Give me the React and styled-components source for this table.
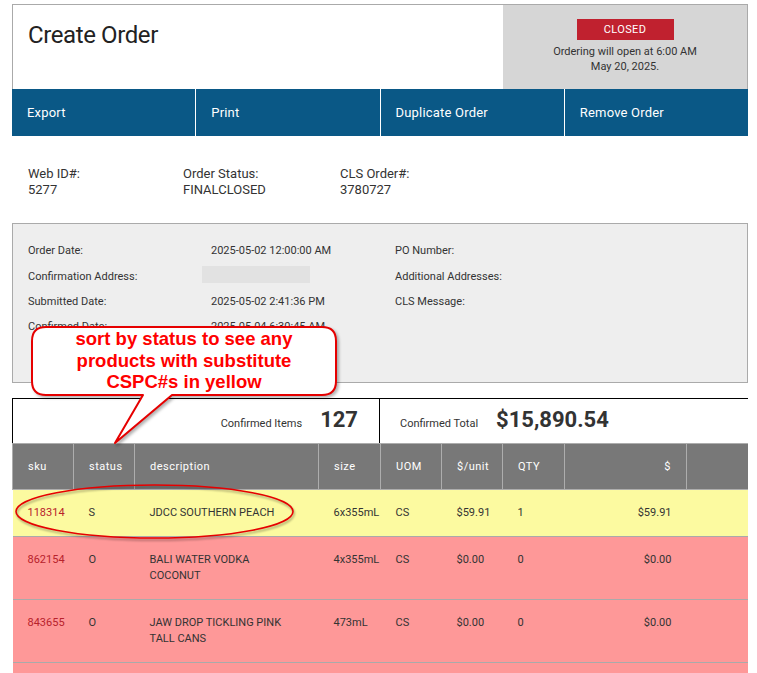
import React from "react";
import styled, { createGlobalStyle } from "styled-components";

const GlobalStyle = createGlobalStyle`
  *, *::before, *::after {
    box-sizing: border-box;
  }
  body {
    margin: 0;
    background: #ffffff;
    font-family: Roboto, "Liberation Sans", Arial, sans-serif;
    color: #333333;
  }
`;

const Page = styled.div`
  position: relative;
  width: 748px;
  height: 673px;
  padding: 4px 0 0 12px;
  overflow: hidden;
`;

const Header = styled.header`
  display: flex;
  height: 85px;
  border: 1px solid #aaaaaa;
  border-bottom: none;
`;

const Title = styled.h1`
  flex: 1;
  margin: 0;
  padding: 15px 0 0 15px;
  font-size: 24px;
  font-weight: 400;
  line-height: 30px;
  letter-spacing: -0.4px;
  color: #222222;
`;

const StatusPanel = styled.div`
  width: 244px;
  background: #d6d6d6;
  display: flex;
  flex-direction: column;
  align-items: center;
  padding-top: 14px;
  font-size: 11px;
  line-height: 15px;
  color: #333333;
  text-align: center;
`;

const Badge = styled.span`
  display: flex;
  align-items: center;
  justify-content: center;
  width: 97px;
  height: 21px;
  margin-bottom: 4px;
  background: #c0212f;
  color: #ffffff;
  font-size: 11px;
  letter-spacing: 0.4px;
`;

const NavBar = styled.nav`
  display: grid;
  grid-template-columns: repeat(4, 1fr);
  gap: 1px;
  background: #ffffff;
`;

const NavButton = styled.div`
  height: 47px;
  display: flex;
  align-items: center;
  padding-left: 15px;
  background: #0a5886;
  color: #ffffff;
  font-size: 13px;
  letter-spacing: 0.2px;
`;

const Meta = styled.section`
  display: grid;
  grid-template-columns: 155px 157px 1fr;
  padding: 30px 0 25px 16px;
  font-size: 13px;
  line-height: 16px;
  color: #333333;
`;

const Details = styled.section`
  display: grid;
  grid-template-columns: 183px 184px 1fr;
  grid-auto-rows: 25.4px;
  align-items: center;
  height: 160px;
  padding: 14px 0 0 15px;
  background: #eeeeee;
  border: 1px solid #aaaaaa;
  font-size: 11px;
  color: #333333;
`;

const Redacted = styled.span`
  display: block;
  width: 108px;
  height: 17px;
  margin: -4px 0 0 -9px;
  background: #e2e2e2;
`;

const Summary = styled.section`
  display: flex;
  margin-top: 15px;
  height: 45px;
  border-top: 1px solid #000000;
`;

const SummaryHalf = styled.div`
  display: flex;
  align-items: baseline;
  justify-content: ${(p) => (p.$end ? "flex-end" : "flex-start")};
  gap: 18px;
  width: ${(p) => (p.$end ? "368px" : "auto")};
  flex: ${(p) => (p.$end ? "none" : 1)};
  padding: 10px ${(p) => (p.$end ? "21px" : "0")} 0 ${(p) => (p.$end ? "0" : "20px")};
  border-left: ${(p) => (p.$end ? "1px solid #000" : "none")};
  border-right: ${(p) => (p.$end ? "1px solid #000" : "none")};
`;

const SummaryLabel = styled.span`
  font-size: 11px;
  color: #333333;
`;

const SummaryValue = styled.span`
  font-size: 22px;
  line-height: 22px;
  font-weight: 700;
  color: #333333;
`;

const Table = styled.table`
  width: 736px;
  table-layout: fixed;
  border-collapse: collapse;
  font-size: 11px;
`;

const Th = styled.th`
  height: 46px;
  padding: 0 15px;
  background: #787878;
  border: 1px solid #adadad;
  color: #ffffff;
  font-weight: 400;
  letter-spacing: 0.5px;
  text-align: ${(p) => (p.$right ? "right" : "left")};
`;

const Row = styled.tr`
  background: ${(p) => (p.$tone === "sub" ? "#fcfaa0" : "#fe9898")};
  border-bottom: 1px solid #aaaaaa;
`;

const Td = styled.td`
  vertical-align: top;
  padding: 15px ${(p) => (p.$wide ? "22px" : "15px")} 15px 15px;
  line-height: 16px;
  color: ${(p) => (p.$sku ? "#b8222c" : "#333333")};
  text-align: ${(p) => (p.$right ? "right" : "left")};
`;

const Callout = styled.div`
  position: absolute;
  left: 32px;
  top: 327px;
  z-index: 2;
  isolation: isolate;
  width: 304px;
  padding-top: 1px;
  text-align: center;
  font-family: "Liberation Sans", Arial, sans-serif;
  font-weight: 700;
  font-size: 18.5px;
  line-height: 21.5px;
  color: #ff0000;
  pointer-events: none;
`;

const CalloutShape = styled.svg`
  position: absolute;
  left: -3px;
  top: -3px;
  z-index: 0;
  overflow: visible;
  filter: drop-shadow(2px 2px 1.5px rgba(0, 0, 0, 0.3));
`;

const CalloutText = styled.div`
  position: relative;
  z-index: 1;
`;

const Highlight = styled.svg`
  position: absolute;
  left: 12px;
  top: 480px;
  z-index: 1;
  overflow: visible;
  pointer-events: none;
  filter: drop-shadow(1px 2px 1px rgba(0, 0, 0, 0.35));
`;

const columns = [
  { key: "sku", label: "sku", width: 61 },
  { key: "status", label: "status", width: 61 },
  { key: "desc", label: "description", width: 184 },
  { key: "size", label: "size", width: 62 },
  { key: "uom", label: "UOM", width: 61 },
  { key: "unit", label: "$/unit", width: 61 },
  { key: "qty", label: "QTY", width: 62 },
  { key: "total", label: "$", width: 122, right: true },
  { key: "extra", label: "", width: 62 },
];

const rows = [
  { sku: "118314", status: "S", desc: "JDCC SOUTHERN PEACH", size: "6x355mL", uom: "CS", unit: "$59.91", qty: "1", total: "$59.91", tone: "sub" },
  { sku: "862154", status: "O", desc: "BALI WATER VODKA COCONUT", size: "4x355mL", uom: "CS", unit: "$0.00", qty: "0", total: "$0.00", tone: "out" },
  { sku: "843655", status: "O", desc: "JAW DROP TICKLING PINK TALL CANS", size: "473mL", uom: "CS", unit: "$0.00", qty: "0", total: "$0.00", tone: "out" },
  { sku: "851227", status: "O", desc: "NUTRL VODKA SODA LIME", size: "8x355mL", uom: "CS", unit: "$0.00", qty: "0", total: "$0.00", tone: "out" },
];

const navItems = ["Export", "Print", "Duplicate Order", "Remove Order"];

export default function App() {
  return (
    <>
      <GlobalStyle />
      <Page>
        <Header>
          <Title>Create Order</Title>
          <StatusPanel>
            <Badge>CLOSED</Badge>
            <span>Ordering will open at 6:00 AM</span>
            <span>May 20, 2025.</span>
          </StatusPanel>
        </Header>

        <NavBar>
          {navItems.map((item) => (
            <NavButton key={item}>{item}</NavButton>
          ))}
        </NavBar>

        <Meta>
          <div>Web ID#:<br />5277</div>
          <div>Order Status:<br />FINALCLOSED</div>
          <div>CLS Order#:<br />3780727</div>
        </Meta>

        <Details>
          <span>Order Date:</span>
          <span>2025-05-02 12:00:00 AM</span>
          <span>PO Number:</span>
          <span>Confirmation Address:</span>
          <Redacted />
          <span>Additional Addresses:</span>
          <span>Submitted Date:</span>
          <span>2025-05-02 2:41:36 PM</span>
          <span>CLS Message:</span>
          <span>Confirmed Date:</span>
          <span>2025-05-04 6:30:45 AM</span>
          <span />
        </Details>

        <Summary>
          <SummaryHalf $end>
            <SummaryLabel>Confirmed Items</SummaryLabel>
            <SummaryValue>127</SummaryValue>
          </SummaryHalf>
          <SummaryHalf>
            <SummaryLabel>Confirmed Total</SummaryLabel>
            <SummaryValue>$15,890.54</SummaryValue>
          </SummaryHalf>
        </Summary>

        <Table>
          <colgroup>
            {columns.map((c) => (
              <col key={c.key} style={{ width: c.width }} />
            ))}
          </colgroup>
          <thead>
            <tr>
              {columns.map((c) => (
                <Th key={c.key} $right={c.right}>{c.label}</Th>
              ))}
            </tr>
          </thead>
          <tbody>
            {rows.map((r) => (
              <Row key={r.sku} $tone={r.tone}>
                <Td $sku>{r.sku}</Td>
                <Td>{r.status}</Td>
                <Td $wide>{r.desc}</Td>
                <Td>{r.size}</Td>
                <Td>{r.uom}</Td>
                <Td>{r.unit}</Td>
                <Td>{r.qty}</Td>
                <Td $right>{r.total}</Td>
                <Td />
              </Row>
            ))}
          </tbody>
        </Table>

        <Highlight width="285" height="62" viewBox="0 0 285 62">
          <ellipse cx="142.5" cy="31.5" rx="138.5" ry="26.5" fill="none" stroke="#e60000" strokeWidth="1.6" />
        </Highlight>

        <Callout>
          <CalloutShape width="310" height="122" viewBox="-3 -3 310 122">
            <path
              d="M14 0 H290 Q304 0 304 14 V54 Q304 68 290 68 H140 L83 116 L111 68 H14 Q0 68 0 54 V14 Q0 0 14 0 Z"
              fill="#ffffff"
              stroke="#e60000"
              strokeWidth="2"
              strokeLinejoin="round"
            />
          </CalloutShape>
          <CalloutText>
            sort by status to see any
            <br />
            products with substitute
            <br />
            CSPC#s in yellow
          </CalloutText>
        </Callout>
      </Page>
    </>
  );
}
